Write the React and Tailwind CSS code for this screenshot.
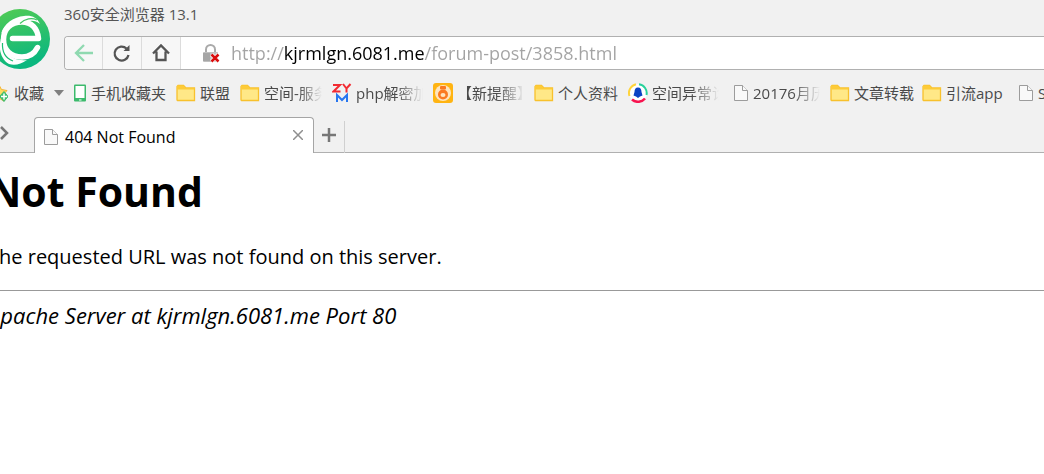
import React from 'react';

const Logo = () => (
  <svg viewBox="0 0 60 60" className="h-[60px] w-[60px]" aria-hidden="true">
    <defs>
      <linearGradient id="logo" x1="0" y1="0" x2="0.3" y2="1">
        <stop offset="0" stopColor="#55cc52" />
        <stop offset="1" stopColor="#0bb77f" />
      </linearGradient>
    </defs>
    <circle cx="30" cy="30" r="30" fill="url(#logo)" />
    <path d="M22.500 29.500H48.500C47.500 19 41 13 32 13C21 13 13.500 20 13.500 30.500C13.500 41 21 48 32 48C39 48 44.500 44.500 47.500 38.500" fill="none" stroke="#fff" strokeWidth="5.500" strokeLinecap="round" strokeLinejoin="round" />
    <path d="M11 25C14 14 24 8 34 7C41 6 47 8 50 15C45 11 40 11 34 14C25 11 17 16 11 25Z" fill="#fff" />
    <path d="M30 14.500C35 9.500 42 8.500 47 11" fill="none" stroke="#3fc662" strokeWidth="1.200" />
    <path d="M12 27C8 35 9 49 19 55C25 57 31 55 37 51C28 52 20 49 17 43Z" fill="#fff" />
    <path d="M12.500 34C12 42 15 49 23 52" fill="none" stroke="#1dbd74" strokeWidth="1.200" />
  </svg>
);

const BackIcon = () => (
  <svg viewBox="0 0 20 20" className="h-5 w-5" fill="none" stroke="#8fd9b0" strokeWidth="2.300" aria-hidden="true">
    <path d="M10 2L2 10L10 18M2 10H19" />
  </svg>
);

const ReloadIcon = () => (
  <svg viewBox="0 0 20 20" className="h-5 w-5" fill="none" stroke="#555" strokeWidth="2.300" aria-hidden="true">
    <path d="M16.500 12A7 7 0 1 1 14.500 5.500" />
    <path d="M11.500 8H17.500V2Z" fill="#555" stroke="none" />
  </svg>
);

const HomeIcon = () => (
  <svg viewBox="0 0 20 20" className="h-5 w-5" fill="none" stroke="#555" strokeWidth="2.300" aria-hidden="true">
    <path d="M2 10.500L10 2.500L18 10.500M5.500 8.500V17H14.500V8.500" />
  </svg>
);

const LockIcon = () => (
  <svg viewBox="0 0 18 20" className="h-5 w-[18px] shrink-0" aria-hidden="true">
    <path d="M4 10V6.500A4.500 4.500 0 0 1 13 6.500V10" fill="none" stroke="#aaa" strokeWidth="2" />
    <rect x="1" y="9" width="15" height="10" rx="1" fill="#c0c0c0" />
    <path d="M1 11H8M1 13H8M1 15H8M1 17H8" stroke="#8c8c8c" strokeWidth="1" />
    <path d="M9.500 11.500L16.500 18.500M16.500 11.500L9.500 18.500" stroke="#fff" strokeWidth="4" />
    <path d="M9.500 11.500L16.500 18.500M16.500 11.500L9.500 18.500" stroke="#d90d0d" strokeWidth="2.500" />
  </svg>
);

const StarIcon = () => (
  <svg viewBox="0 0 20 20" className="h-5 w-5 shrink-0" aria-hidden="true">
    <path d="M10.500 1L13.500 6.500L19 7.500L15 12L16 18L10.500 15L5 18L6 12L2 7.500L7.500 6.500Z" fill="#ffdc62" stroke="#f3b234" />
    <path d="M16 8.500L20 13.500L16 18.500L11.500 13.500Z" fill="#3cbd6d" stroke="#3cbd6d" />
    <path d="M16 10.500V16.500M13 13.500H19" stroke="#fff" strokeWidth="1.500" />
  </svg>
);

const PhoneIcon = () => (
  <svg viewBox="0 0 20 20" className="h-5 w-5" aria-hidden="true">
    <rect x="7" y="1.500" width="12" height="17" rx="1" fill="#3cba6c" />
    <rect x="8.500" y="3" width="9" height="12" fill="#fff" />
    <path d="M12 17H14.500" stroke="#fff" />
  </svg>
);

const FolderIcon = () => (
  <svg viewBox="0 0 20 20" className="h-5 w-5" aria-hidden="true">
    <path d="M1 17V3.500L2 2.500H7.500L10 5H18.500V17.500H1.500Z" fill="#ffe887" stroke="#f8c12d" strokeWidth="1.300" />
    <path d="M1 3L2 2.500H7.500L10 5H18.500V6.500H1Z" fill="#fdcb38" />
  </svg>
);

const FileIcon = () => (
  <svg viewBox="0 0 20 20" className="h-5 w-5 shrink-0" fill="#f9f9f9" stroke="#9c9c9c" aria-hidden="true">
    <path d="M5.500 2.500H13.500L18.500 7.500V17.500H5.500Z" />
    <path d="M13.500 2.500V7.500H18.500" />
  </svg>
);

const ZymIcon = () => (
  <svg viewBox="0 0 20 20" className="h-5 w-5" fill="none" strokeWidth="2" aria-hidden="true">
    <path d="M1 2H8L1.500 8.500H8.500M11 1L14.500 5.500L18.500 1M14.500 5V9.500" stroke="#f22b32" />
    <path d="M5 19V12L10 17L15 12V19" stroke="#2776ef" />
  </svg>
);

const BagIcon = () => (
  <svg viewBox="0 0 20 20" className="h-5 w-5" aria-hidden="true">
    <rect width="20" height="20" rx="3" fill="#ffb412" />
    <circle cx="10" cy="10" r="8" fill="#ffe5bd" />
    <rect x="7" y="3" width="6" height="3.500" rx="1" fill="#fb7a20" />
    <circle cx="10" cy="11.500" r="5" fill="#fb7a20" />
    <ellipse cx="10" cy="12" rx="2.500" ry="2" fill="#ffe5bd" />
  </svg>
);

const SpaceIcon = () => (
  <svg viewBox="0 0 20 20" className="h-5 w-5" fill="none" strokeWidth="2" aria-hidden="true">
    <circle cx="10" cy="10" r="9" fill="#fff" />
    <path d="M1.500 13A9 9 0 0 1 8 1.200" stroke="#ffd43b" />
    <path d="M11 1.200A9 9 0 0 1 18.500 12" stroke="#28d19c" />
    <path d="M17 15.500A9 9 0 0 1 4 16.500" stroke="#f7144f" strokeWidth="2.500" />
    <path d="M10 4.500C7.500 4.500 6.500 6.500 6.500 9L5.500 12.500L8 13.500L10 15L12 13.500L14.500 12.500L13.500 9C13.500 6.500 12.500 4.500 10 4.500Z" fill="#0b43c4" />
  </svg>
);

const bookmarks = [
  { title: '手机收藏夹', icon: PhoneIcon, width: 'w-[75px]' },
  { title: '联盟', icon: FolderIcon, width: 'w-[30px]' },
  { title: '空间-服务', icon: FolderIcon, width: 'w-[58px]', fade: true },
  { title: 'php解密加', icon: ZymIcon, width: 'w-[67px]', fade: true },
  { title: '【新提醒】', icon: BagIcon, width: 'w-[67px]', fade: true },
  { title: '个人资料', icon: FolderIcon, width: 'w-[60px]' },
  { title: '空间异常诊', icon: SpaceIcon, width: 'w-[67px]', fade: true },
  { title: '20176月历', icon: FileIcon, width: 'w-[67px]', fade: true },
  { title: '文章转载', icon: FolderIcon, width: 'w-[58px]' },
  { title: '引流app', icon: FolderIcon, width: 'w-[58px]' },
  { title: 'S', icon: FileIcon, width: 'w-[58px]' },
];

const AddressBar = () => (
  <div className="flex h-[34px] overflow-hidden rounded-l-sm border border-r-0 border-[#b0b0b0] bg-white">
    <button type="button" aria-label="后退" className="flex w-[38px] items-center justify-center border-r border-[#dcdcdc] bg-[#f7f7f7]">
      <BackIcon />
    </button>
    <button type="button" aria-label="刷新" className="flex w-[39px] items-center justify-center border-r border-[#dcdcdc] bg-[#f7f7f7]">
      <ReloadIcon />
    </button>
    <button type="button" aria-label="主页" className="flex w-[39px] items-center justify-center border-r border-[#dcdcdc] bg-[#f7f7f7]">
      <HomeIcon />
    </button>
    <div className="flex min-w-0 flex-1 items-center gap-[11px] pl-[21px]">
      <LockIcon />
      {/* host part of the address is darker than the rest */}
      <input
        type="text"
        aria-label="地址栏"
        defaultValue="http://kjrmlgn.6081.me/forum-post/3858.html"
        className="min-w-0 flex-1 bg-[linear-gradient(90deg,#a3a3a3_53px,#000_53px,#000_193px,#a3a3a3_193px)] bg-clip-text text-lg leading-7 text-transparent outline-none"
      />
    </div>
  </div>
);

const BookmarkBar = () => (
  <nav className="flex h-10 items-center gap-2.5 overflow-hidden text-[15px] leading-5 text-[#4a4a4a]">
    <button type="button" className="-ml-3 flex shrink-0 items-center">
      <StarIcon />
      <span className="ml-1.5">收藏</span>
      <svg viewBox="0 0 10 6" className="ml-2.5 h-1.5 w-2.5" aria-hidden="true">
        <path d="M0 0H10L5 6Z" fill="#808080" />
      </svg>
    </button>
    {bookmarks.map(({ title, icon: Icon, width, fade }, i) => (
      <a key={title} href="#" className={`flex shrink-0 items-center gap-1 ${i === 0 ? '-ml-[7px]' : ''}`}>
        <Icon />
        <span
          className={`whitespace-nowrap ${width} ${
            fade ? 'overflow-hidden [mask-image:linear-gradient(90deg,#000_60%,transparent)]' : ''
          }`}
        >
          {title}
        </span>
      </a>
    ))}
  </nav>
);

const TabBar = () => (
  <div className="flex h-9 items-end shadow-[inset_0_-1px_0_#b0b0b0]">
    <button type="button" aria-label="展开" className="mr-6 flex h-9 w-2.5 items-center pb-1">
      <svg viewBox="0 0 10 14" className="h-3.5 w-2.5" fill="none" stroke="#777" strokeWidth="2.500" aria-hidden="true">
        <path d="M1 1L7 7L1 13" />
      </svg>
    </button>
    <div className="flex h-9 w-[280px] items-center rounded-t border border-b-0 border-[#a5a5a5] bg-white pt-0.5 pr-2.5 pl-1">
      <FileIcon />
      <span className="ml-1.5 flex-1 text-base leading-5 text-black">404 Not Found</span>
      <button type="button" aria-label="关闭标签页" className="pb-1">
        <svg viewBox="0 0 10 10" className="h-2.5 w-2.5" stroke="#8f8f8f" strokeWidth="1.500" aria-hidden="true">
          <path d="M0 0L10 10M10 0L0 10" />
        </svg>
      </button>
    </div>
    <button type="button" aria-label="新标签页" className="flex h-8 w-[31px] items-center justify-center border-r border-[#d0d0d0] pb-1">
      <svg viewBox="0 0 14 14" className="h-3.5 w-3.5" stroke="#777" strokeWidth="2.500" aria-hidden="true">
        <path d="M7 0V14M0 7H14" />
      </svg>
    </button>
  </div>
);

const App = () => {
  return (
    <div className="min-h-screen overflow-hidden bg-white font-['Open_Sans','Noto_Sans_CJK_SC',sans-serif]">
      <header className="bg-[#f1f1f1]">
        <div className="flex">
          <div className="-ml-2.5 shrink-0 pt-[9px] pr-3.5">
            <Logo />
          </div>
          <div className="min-w-0 flex-1">
            <div className="flex h-9 items-center pb-2 text-[15px] leading-5 text-[#555]">360安全浏览器 13.1</div>
            <AddressBar />
          </div>
        </div>
        <div className="pt-[3px] pb-1">
          <BookmarkBar />
        </div>
        <TabBar />
      </header>

      <main className="-ml-3 pt-2 text-black">
        <h1 className="text-[41px] leading-[60px] font-bold">Not Found</h1>
        <p className="mt-5 text-xl leading-8">The requested URL was not found on this server.</p>
        <hr className="mt-[17px] mb-2 border-[#999]" />
        <address className="text-[22px] leading-8 italic">Apache Server at kjrmlgn.6081.me Port 80</address>
      </main>
    </div>
  );
};

export default App;
